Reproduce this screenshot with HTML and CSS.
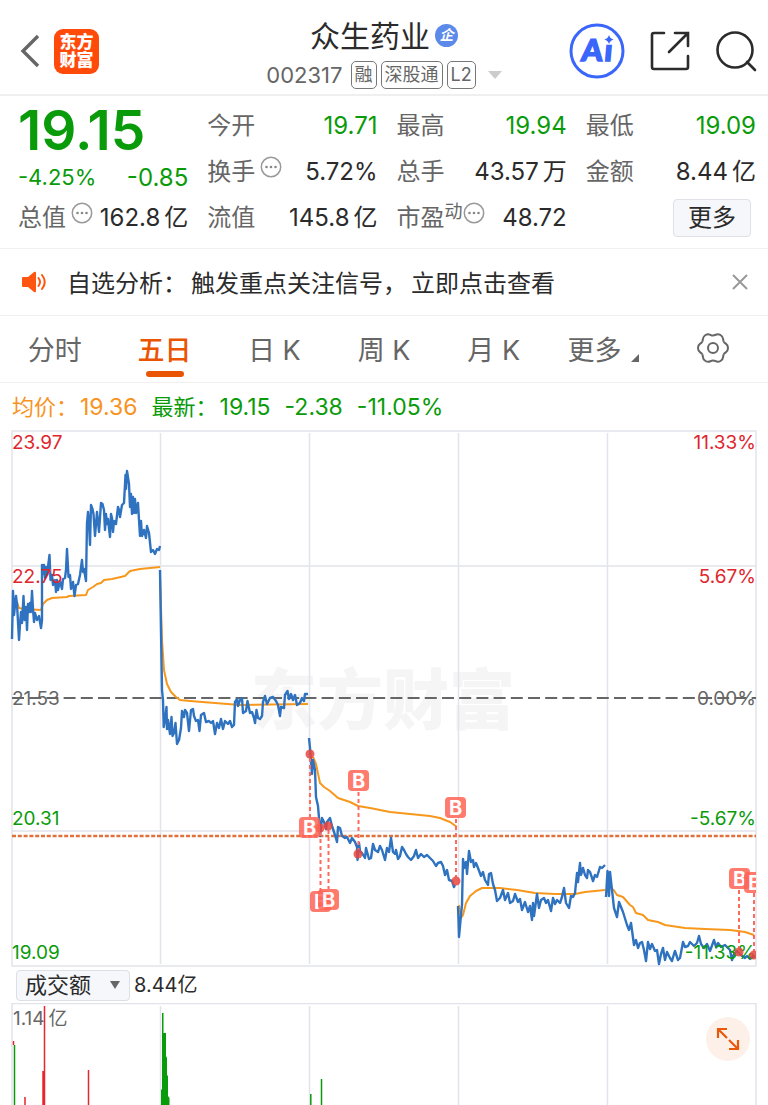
FILE: index.html
```html
<!DOCTYPE html>
<html lang="zh-CN">
<head>
    <meta charset="UTF-8">
    <meta name="viewport" content="width=device-width, initial-scale=1.0">
    <title>众生药业 002317</title>
    <link rel="stylesheet" href="styles.css">
</head>
<body>
    <header class="header">
        <div class="header_left">
            <button class="icon_btn" type="button" aria-label="返回">
                <svg width="20" height="34" viewBox="0 0 20 34"><path d="M18 2 3 17 18 32" fill="none" stroke="#666" stroke-width="3.4"/></svg>
            </button>
            <div class="logo"><span>东方</span><span>财富</span></div>
        </div>
        <div class="title">
            <h1 class="name">众生药业<span class="qi">企</span></h1>
            <div class="code">
                <span class="code_num">002317</span>
                <span class="tag">融</span>
                <span class="tag">深股通</span>
                <span class="tag">L2</span>
                <svg class="code_arrow" width="14" height="8" viewBox="0 0 14 8"><path d="M0 0h14L7 8z" fill="#ccc"/></svg>
            </div>
        </div>
        <div class="header_right">
            <button class="icon_btn" type="button" aria-label="Ai">
                <svg width="56" height="56" viewBox="0 0 56 56">
                    <circle cx="28" cy="28" r="26" fill="none" stroke="#3a66fb" stroke-width="3"/>
                    <g transform="skewX(-5)"><text class="ai" x="15" y="38">A</text><text class="ai" x="38" y="38">ı</text></g>
                    <path d="M40 12q1 3.500 4.500 4.500q-3.500 1-4.500 4.500q-1-3.500-4.500-4.500q3.500-1 4.500-4.500z" fill="#3a66fb"/>
                </svg>
            </button>
            <button class="icon_btn" type="button" aria-label="分享">
                <svg width="42" height="42" viewBox="0 0 42 42" fill="none" stroke="#2b2b2b" stroke-width="2.600" stroke-linecap="round">
                    <path d="M15 3H5Q3 3 3 5v32q0 2 2 2h32q2 0 2-2V26M26 3h13v13M39 3 20 22"/>
                </svg>
            </button>
            <button class="icon_btn" type="button" aria-label="搜索">
                <svg width="42" height="42" viewBox="0 0 42 42" fill="none" stroke="#2b2b2b" stroke-width="2.600" stroke-linecap="round">
                    <circle cx="20" cy="20" r="17.500"/><path d="M32 32l8 8"/>
                </svg>
            </button>
        </div>
    </header>

    <!-- 行情 -->
    <section class="quote">
        <div class="quote_col">
            <div class="price">19.15</div>
            <div class="change"><span class="percent">-4.25%</span><span>-0.85</span></div>
            <div class="item"><span class="label">总值<svg class="dots"><use href="#dots"/></svg></span><span class="value">162.8<span class="unit">亿</span></span></div>
        </div>
        <div class="quote_col">
            <div class="item"><span class="label">今开</span><span class="value down">19.71</span></div>
            <div class="item"><span class="label">换手<svg class="dots"><use href="#dots"/></svg></span><span class="value">5.72%</span></div>
            <div class="item"><span class="label">流值</span><span class="value">145.8<span class="unit">亿</span></span></div>
        </div>
        <div class="quote_col">
            <div class="item"><span class="label">最高</span><span class="value down">19.94</span></div>
            <div class="item"><span class="label">总手</span><span class="value">43.57<span class="unit">万</span></span></div>
            <div class="item"><span class="label">市盈<span class="sup">动</span><svg class="dots"><use href="#dots"/></svg></span><span class="value">48.72</span></div>
        </div>
        <div class="quote_col">
            <div class="item"><span class="label">最低</span><span class="value down">19.09</span></div>
            <div class="item"><span class="label">金额</span><span class="value">8.44<span class="unit">亿</span></span></div>
            <div class="item more_row"><button class="more" type="button">更多</button></div>
        </div>
    </section>

    <div class="notice">
        <svg class="horn" width="26" height="22" viewBox="0 0 26 22">
            <path d="M1 7q0-1 1-1h5l6-5q2-1 2 1v18q0 2-2 1l-6-5H2q-1 0-1-1z" fill="#ff5511"/>
            <path d="M17.500 7q3 4 0 8M21 4q5.500 7 0 14" fill="none" stroke="#ff5511" stroke-width="2" stroke-linecap="round"/>
        </svg>
        <p class="notice_text"><span>自选分析：</span><span>触发重点关注信号，</span><span>立即点击查看</span></p>
        <button class="icon_btn" type="button" aria-label="关闭">
            <svg width="16" height="16" viewBox="0 0 16 16"><path d="M1 1l14 14M15 1 1 15" stroke="#999" stroke-width="2"/></svg>
        </button>
    </div>

    <nav class="tabs">
        <button class="tab" type="button">分时</button>
        <button class="tab active" type="button">五日</button>
        <button class="tab" type="button">日 K</button>
        <button class="tab" type="button">周 K</button>
        <button class="tab" type="button">月 K</button>
        <button class="tab" type="button">更多<svg class="corner" width="8" height="8" viewBox="0 0 8 8"><path d="M8 0v8H0z" fill="#666"/></svg></button>
        <button class="tab" type="button" aria-label="设置">
            <svg width="34" height="34" viewBox="-17 -17 34 34" fill="none" stroke="#666" stroke-width="2">
                <path id="lobe" d="M0-12.500C3-12.500 3.600-15.200 7.500-13S9.300-8.800 10.800-6.250"/>
                <use href="#lobe" transform="rotate(60)"/><use href="#lobe" transform="rotate(120)"/>
                <use href="#lobe" transform="rotate(180)"/><use href="#lobe" transform="rotate(240)"/>
                <use href="#lobe" transform="rotate(300)"/>
                <circle r="5"/>
            </svg>
        </button>
    </nav>

    <div class="legend">
        <span class="avg"><span class="legend_label">均价：</span>19.36</span>
        <span><span class="legend_label">最新：</span>19.15</span>
        <span>-2.38</span>
        <span>-11.05%</span>
    </div>

    <!-- 五日走势 -->
    <svg class="chart" viewBox="0 430 768 537">
        <defs>
            <symbol id="dots" viewBox="0 0 22 22">
                <circle cx="11" cy="11" r="9.700" fill="none" stroke="#999" stroke-width="1.500"/>
                <circle cx="6.500" cy="11" r="1.300" fill="#888"/><circle cx="11" cy="11" r="1.300" fill="#888"/><circle cx="15.500" cy="11" r="1.300" fill="#888"/>
            </symbol>
            <clipPath id="plot"><rect x="12" y="431" width="744" height="535"/></clipPath>
        </defs>
        <text class="watermark" x="251" y="724">东方财富</text>
        <path class="grid" d="M12 431H756V966H12zM12 566H756M12 831H756M160.500 433V964M309.500 433V964M458.500 433V964M607.500 433V964"/>
        <path d="M12 698H756" stroke="#666" stroke-width="2" stroke-dasharray="12 5.200"/>
        <path d="M12 836H756" stroke="#e0703c" stroke-width="2.500" stroke-dasharray="4 1.800"/>

        <g class="avg_line">
            <polyline points="17,602 19,608 24,609 41,610 43,604 47,600 52,598 67,597 69,596 86,595 88,590 93,587 97,584 101,583 104,580 112,579 125,576 130,571 140,569 160,567"/>
            <polyline points="160,575 162,640 164,670 167,684 171,692 176,697 180,700 190,701 215,703 240,705 308,704"/>
            <polyline points="313,757 316,764 320,783 324,787 330,791 338,798 350,802 358,806 370,808 390,812 410,814 430,816 440,818 450,822 457,827"/>
            <polyline points="459,905 461,918 463,915 466,903 470,896 476,891 482,888 500,888 517,890 535,893 555,894 575,894 585,892 605,890"/>
            <polyline points="613,889 617,895 623,897 630,905 633,907 636,913 643,915 648,920 658,922 665,925 685,928 705,929 730,930 745,932 754,935"/>
        </g>
        <g class="price_line">
            <polyline points="12,639 13,591 14,615 16,596 17,604 19,640 20,624 21,612 22,623 23.500,596 24.500,620 26,607 27,630 28,604 29,612 30,603 31,612 32,591 33,609 34,622 35,613 37,620 39,616 41,628 42,620 42,565 43,574 44,565 45,578 46,567 47,575 48,567 49.500,555 50.500,580 52,575 53,585 55,580 56,592 57,580 58,590 60,581 62,589 63,579 65,578 66,570 67,549 68.500,577 70,575 71,589 73,582 74.500,596 76,585 78,584 80,575 82,560 83,572 84,569 86,581 87,523 88,512 89,524 90,545 91,505 92.500,509 93.500,514 95,536 97,512 99,532 101,503 102.500,504 104,510 105,530 106,514 107,524 108,519 110,537 111,514 112,518 113,532 114,521 116,524 118,507 119,510 120,517 122,505 124,503 125.500,475 126,489 127,471 129,484 130,507 131,494 132,514 133,497 134,513 135,499 136,513 138,503 139,520 140,536 141,521 142,536 144,530 146,538 147,526 149,533 151,552 153,550 155,554 157,549 159,550 160,546"/>
            <polyline points="160,570 161,630 162,690 163,700 163.700,727 165,720 166.500,707 167,729 168,720 170,734 171.500,717 172.500,736 174,733 175.500,723 177,744 179,740 181,728 182,711 184,717 185,710 187,713 189,731 191,710 193,709 194,716 196,721 198,720 199.500,731 201,715 204,713 206,722 209,721 211,723 213,721 215,734 217,723 219,728 221,719 223,729 225,721 228,724 230,721 232,727 234,725 235,702 237,699 238,706 240,700 242,698 243,713 246,711 247.500,701 250,713 252,712 254,718 255,723 256.500,710 258,718 260,719 262,716 263,702 265,696 267,704 270,698 273,697 276,701 278,705 280,716 281,707 284,708 285,695 287.500,691 289,699 291,694 293,700 295,695 297,705 300,703 302,698 304,701 305,694 308,694"/>
            <polyline points="309,738 310,748 311,760 312,774 313,760 315,770 316,797 318,806 319,818 320,836 322,818 324,822 326,829 327,822 330,818 332,826 335,835 337,842 338,827 340,828 342,836 345,838 347,837 350,843 352,838 355,842 357,847 357.500,860 359,843 360,851 362,853 365,858 366,848 369,859 371,858 373,844 375,850 378,852 380,846 382,850 385,860 387,848 389,852 391,838 393,852 395,854 396,850 398,859 400,856 402,847 404,850 406,854 408,857 411,860 414,856 416,850 418,858 421,854 424,857 427,855 430,858 433,861 436,866 438,863 441,862 443,866 445,875 447,870 449,880 452,881 454,887 455,885"/>
            <polyline points="458,906 458.500,920 459,937 461,915 462,905 463,859 464,868 466,862 467,874 469,851 471,862 473,860 474,867 476,863 478,868 481,876 483,872 485,880 488,885 489,874 491,873 493,884 495,890 497,901 500,898 503,890 505,900 508,893 510,903 513,901 515,894 518,902 520,899 522,910 525,902 528,912 530,906 532,920 533,903 534,916 537,894 539,908 541,900 544,898 546,903 548,900 551,911 553,898 555,904 557,900 560,903 562,897 564,888 566,903 569,908 571,896 573,897 575,893 577,873 578,882 580,863 581,875 583,868 585,875 587,878 588,870 590,872 593,881 595,875 597,877 600,867 602,868 605,865"/>
            <polyline points="606,897 607.500,871 609,896 610,872 612,890 614,908 617,917 619,902 623,912 627,925 629,930 631,923 634,945 636,940 638,948 640,943 642,942 644,950 646,961 648,942 650,949 652,944 655,951 657,950 659,964 661,954 663,948 665,960 667,952 670,958 672,961 674,954 675,951 678,960 680,958 683,942 685,947 688,946 690,942 694,946 697,943 699,936 701,944 704,948 707,944 710,951 714,940 716,947 718,943 721,947 725,945 728,948 730,950 732,960 734,954 737,951 741,955 745,958 747,956 750,959 752,957 755,956"/>
        </g>

        <g class="axis">
            <text class="up" x="12" y="449">23.97</text>
            <text class="up" x="12" y="583">22.75</text>
            <text class="flat" x="12" y="705">21.53</text>
            <text class="fall" x="12" y="825">20.31</text>
            <text class="fall" x="12" y="959">19.09</text>
            <text class="up end" x="756" y="449">11.33%</text>
            <text class="up end" x="756" y="583">5.67%</text>
            <text class="flat end" x="756" y="705">0.00%</text>
            <text class="fall end" x="756" y="825">-5.67%</text>
            <text class="fall end" x="756" y="959">-11.33%</text>
        </g>

        <!-- 买点 -->
        <g clip-path="url(#plot)">
            <path class="stem" d="M310 758V817M320.500 832V891M328.500 830V889M358.500 792V850M456 819V877M739 890V948M754 893V951"/>
            <g class="point">
                <circle cx="310" cy="754" r="4.500"/><circle cx="320" cy="828" r="4.500"/><circle cx="328" cy="826" r="4.500"/>
                <circle cx="358" cy="854" r="4.500"/><circle cx="456" cy="881" r="4.500"/><circle cx="739" cy="952" r="4.500"/><circle cx="754" cy="955" r="4.500"/>
            </g>
            <g class="buy">
                <g><rect x="348" y="770" width="21" height="21" rx="4"/><text x="358.500" y="788">B</text></g>
                <g><rect x="445" y="797" width="21" height="21" rx="4"/><text x="455.500" y="815">B</text></g>
                <g><rect x="299" y="817" width="21" height="21" rx="4"/><text x="309.500" y="835">B</text></g>
                <g><rect x="310" y="891" width="21" height="21" rx="4"/><text x="320.500" y="909">B</text></g>
                <g><rect x="318" y="889" width="21" height="21" rx="4"/><text x="328.500" y="907">B</text></g>
                <g><rect x="729" y="868" width="21" height="21" rx="4"/><text x="739.500" y="886">B</text></g>
                <g><rect x="744" y="872" width="21" height="21" rx="4"/><text x="754.500" y="890">B</text></g>
            </g>
        </g>
    </svg>

    <div class="vol_bar">
        <label class="picker">
            <select aria-label="指标"><option>成交额</option></select>
            <svg class="picker_arrow" width="10" height="8" viewBox="0 0 10 8"><path d="M0 0h10L5 8z" fill="#666"/></svg>
        </label>
        <span class="vol_value">8.44亿</span>
    </div>

    <div class="volume">
        <svg class="chart" viewBox="0 1003 768 102">
            <path class="grid" d="M12 1105V1003.500H756V1105M160.500 1006V1105M309.500 1006V1105M458.500 1006V1105M607.500 1006V1105"/>
            <text class="vol_max" x="13" y="1025">1.14<tspan dx="4">亿</tspan></text>
            <path d="M13.500 1041V1045M25 1097V1105M43 1071V1105M44.500 1006V1105M88.500 1070V1105" stroke="#e8262d" stroke-width="1.500"/>
            <path d="M14.500 1045V1105M310.800 1094V1105M321.500 1079V1105" stroke="#0a9b0a" stroke-width="1.500"/>
            <path d="M161 1105V1090L162 1089V1013H163.500V1033H166V1056L167 1058V1075L168 1076V1096L169.500 1098V1105z" fill="#0a9b0a"/>
        </svg>
        <button class="expand" type="button" aria-label="全屏">
            <svg width="24" height="24" viewBox="0 0 24 24" fill="none" stroke="#e8590c" stroke-width="2.200">
                <path d="M2 11V2h9M2 2l9 9M22 13v9h-9M22 22l-9-9"/>
            </svg>
        </button>
    </div>
</body>
</html>
```

FILE: styles.css
```css
*{
    box-sizing: border-box;
}
body{
    margin: 0;
    background-color: #fff;
    color: #2b2b2b;
    font-family: Inter, "Noto Sans CJK SC", sans-serif;
    font-size: 24px;
    font-weight: 400;
}
button, select{
    font: inherit;
    color: inherit;
    padding: 0;
    border: 0;
    background: none;
}
.icon_btn{
    display: flex;
}
svg{
    flex: none;
}

.header{
    height: 96px;
    padding: 8px 11px 0;
    border-bottom: 2px solid #efefef;
    display: grid;
    grid-template-columns: 1fr auto 1fr;
    align-items: center;
}
    .header_left{
        padding-left: 9px;
        display: flex;
        align-items: center;
        gap: 14px;
    }
        .logo{
            width: 45px;
            height: 45px;
            border-radius: 9px;
            background-color: #ff4a0a;
            color: #fff;
            font-size: 17px;
            font-weight: 900;
            line-height: 18px;
            display: flex;
            flex-direction: column;
            justify-content: center;
            align-items: center;
        }
    .title{
        padding-top: 5px;
        display: flex;
        flex-direction: column;
        align-items: center;
    }
        .name{
            margin: 0;
            font-size: 30px;
            font-weight: 400;
            line-height: 42px;
            display: flex;
            align-items: center;
            gap: 5px;
        }
        .qi{
            width: 23px;
            height: 23px;
            border-radius: 50%;
            background-color: #5c8aea;
            color: #fff;
            font-size: 14px;
            font-style: italic;
            font-weight: 700;
            line-height: 22px;
            text-align: center;
        }
        .code{
            height: 36px;
            display: flex;
            align-items: center;
            gap: 4px;
            color: #666;
            font-size: 22px;
        }
        .code_num{
            margin-right: 4px;
        }
        .tag{
            height: 28px;
            padding: 0 3px;
            border: 1px solid #777;
            border-radius: 5px;
            font-size: 18px;
            line-height: 26px;
        }
        .code_arrow{
            margin-left: 8px;
        }
    .header_right{
        display: flex;
        align-items: center;
        justify-content: flex-end;
        gap: 24px;
    }
        .ai{
            fill: #3a66fb;
            font-family: Lato, sans-serif;
            font-size: 30px;
            font-weight: 900;
            stroke: #3a66fb;
            stroke-width: 1.5px;
        }

.quote{
    padding: 7px 12px 7px 18px;
    border-bottom: 1px solid #f0f0f0;
    display: grid;
    grid-template-columns: repeat(4, 1fr);
    gap: 19px;
}
    .price{
        height: 54px;
        color: #0a9b0a;
        font-size: 55px;
        font-weight: 600;
        line-height: 54px;
    }
    .change{
        height: 38px;
        display: flex;
        justify-content: space-between;
        align-items: center;
        color: #0a9b0a;
        padding-top: 2px;
    }
    .percent{
        font-size: 22px;
    }
    .item{
        height: 46px;
        display: flex;
        justify-content: space-between;
        align-items: center;
        white-space: nowrap;
        line-height: 36px;
    }
    .label{
        display: flex;
        color: #666;
    }
    .down{
        color: #0a9b0a;
    }
    .unit{
        margin-left: 4px;
    }
    .dots{
        width: 22px;
        height: 22px;
        margin: 2px 0 0 5px;
    }
    .sup{
        font-size: 18px;
        line-height: 24px;
    }
    .sup + .dots{
        margin-left: 0;
    }
    .more_row{
        justify-content: flex-end;
        padding-right: 5px;
    }
    .more{
        width: 78px;
        height: 38px;
        border: 1px solid #dfe1e6;
        border-radius: 4px;
        background-color: #f6f7fa;
        line-height: 34px;
    }

.notice{
    height: 67px;
    padding: 0 20px 0 21px;
    border-bottom: 1px solid #f0f0f0;
    display: flex;
    align-items: center;
}
    .notice_text{
        margin: 0 auto 2px 20px;
        display: flex;
        gap: 4px;
    }

.tabs{
    height: 67px;
    border-bottom: 1px solid #f0f0f0;
    display: flex;
}
    .tab{
        flex: 1;
        position: relative;
        padding-bottom: 2px;
        display: flex;
        justify-content: center;
        align-items: center;
        color: #666;
        font-size: 27px;
        white-space: pre;
    }
    .tab.active{
        color: #ea5504;
        font-weight: 500;
    }
    .tab.active::after{
        content: "";
        position: absolute;
        left: calc(50% - 19px);
        bottom: 5px;
        width: 38px;
        height: 6px;
        border-radius: 3px;
        background-color: #ea5504;
    }
    .corner{
        margin: 20px 0 0 10px;
    }

.legend{
    height: 47px;
    padding: 0 12px;
    display: flex;
    align-items: baseline;
    gap: 14px;
    color: #0a9b0a;
    font-size: 23px;
    line-height: 48px;
}
    .legend_label{
        margin-right: 2px;
        font-size: 22px;
    }
    .avg{
        color: #f7931e;
    }

.chart{
    display: block;
    width: 100%;
}
    .grid{
        fill: none;
        stroke: #e1e4ea;
        stroke-width: 1.5px;
    }
    .watermark{
        fill: #f5f5f6;
        font-size: 66px;
        font-weight: 900;
    }
    .avg_line, .price_line{
        fill: none;
        stroke-width: 2px;
        stroke-linejoin: round;
    }
    .avg_line{
        stroke: #f7981d;
    }
    .price_line{
        stroke: #2f73c0;
        stroke-width: 2.4px;
    }
    .axis{
        font-size: 19px;
    }
    .end{
        text-anchor: end;
    }
    .up{
        fill: #e0262d;
    }
    .flat{
        fill: #666;
    }
    .fall{
        fill: #0a9b0a;
    }
    .stem{
        stroke: #ff6a5c;
        stroke-width: 2px;
        stroke-dasharray: 4 3;
    }
    .point{
        fill: #e8463f;
        opacity: .85;
    }
    .buy g{
        opacity: .85;
    }
    .buy rect{
        fill: #ff6455;
    }
    .buy text{
        fill: #fff;
        font-size: 20px;
        font-weight: 700;
        text-anchor: middle;
    }

.vol_bar{
    height: 36px;
    padding: 0 16px;
    display: flex;
    align-items: center;
    gap: 4px;
}
    .picker{
        position: relative;
        display: flex;
    }
    .picker select{
        appearance: none;
        width: 114px;
        height: 31px;
        padding-left: 8px;
        border: 1px solid #dcdfe6;
        border-radius: 4px;
        background-color: #f6f7fa;
        font-size: 22px;
        line-height: 29px;
    }
    .picker_arrow{
        position: absolute;
        right: 10px;
        top: 11px;
        pointer-events: none;
    }
    .vol_value{
        font-size: 20px;
        line-height: 30px;
    }
.volume{
    position: relative;
}
    .vol_max{
        fill: #666;
        font-size: 19px;
    }
    .expand{
        position: absolute;
        right: 18px;
        top: 14px;
        width: 44px;
        height: 44px;
        border-radius: 50%;
        background-color: #fdf0e8;
        display: flex;
        justify-content: center;
        align-items: center;
    }
```
